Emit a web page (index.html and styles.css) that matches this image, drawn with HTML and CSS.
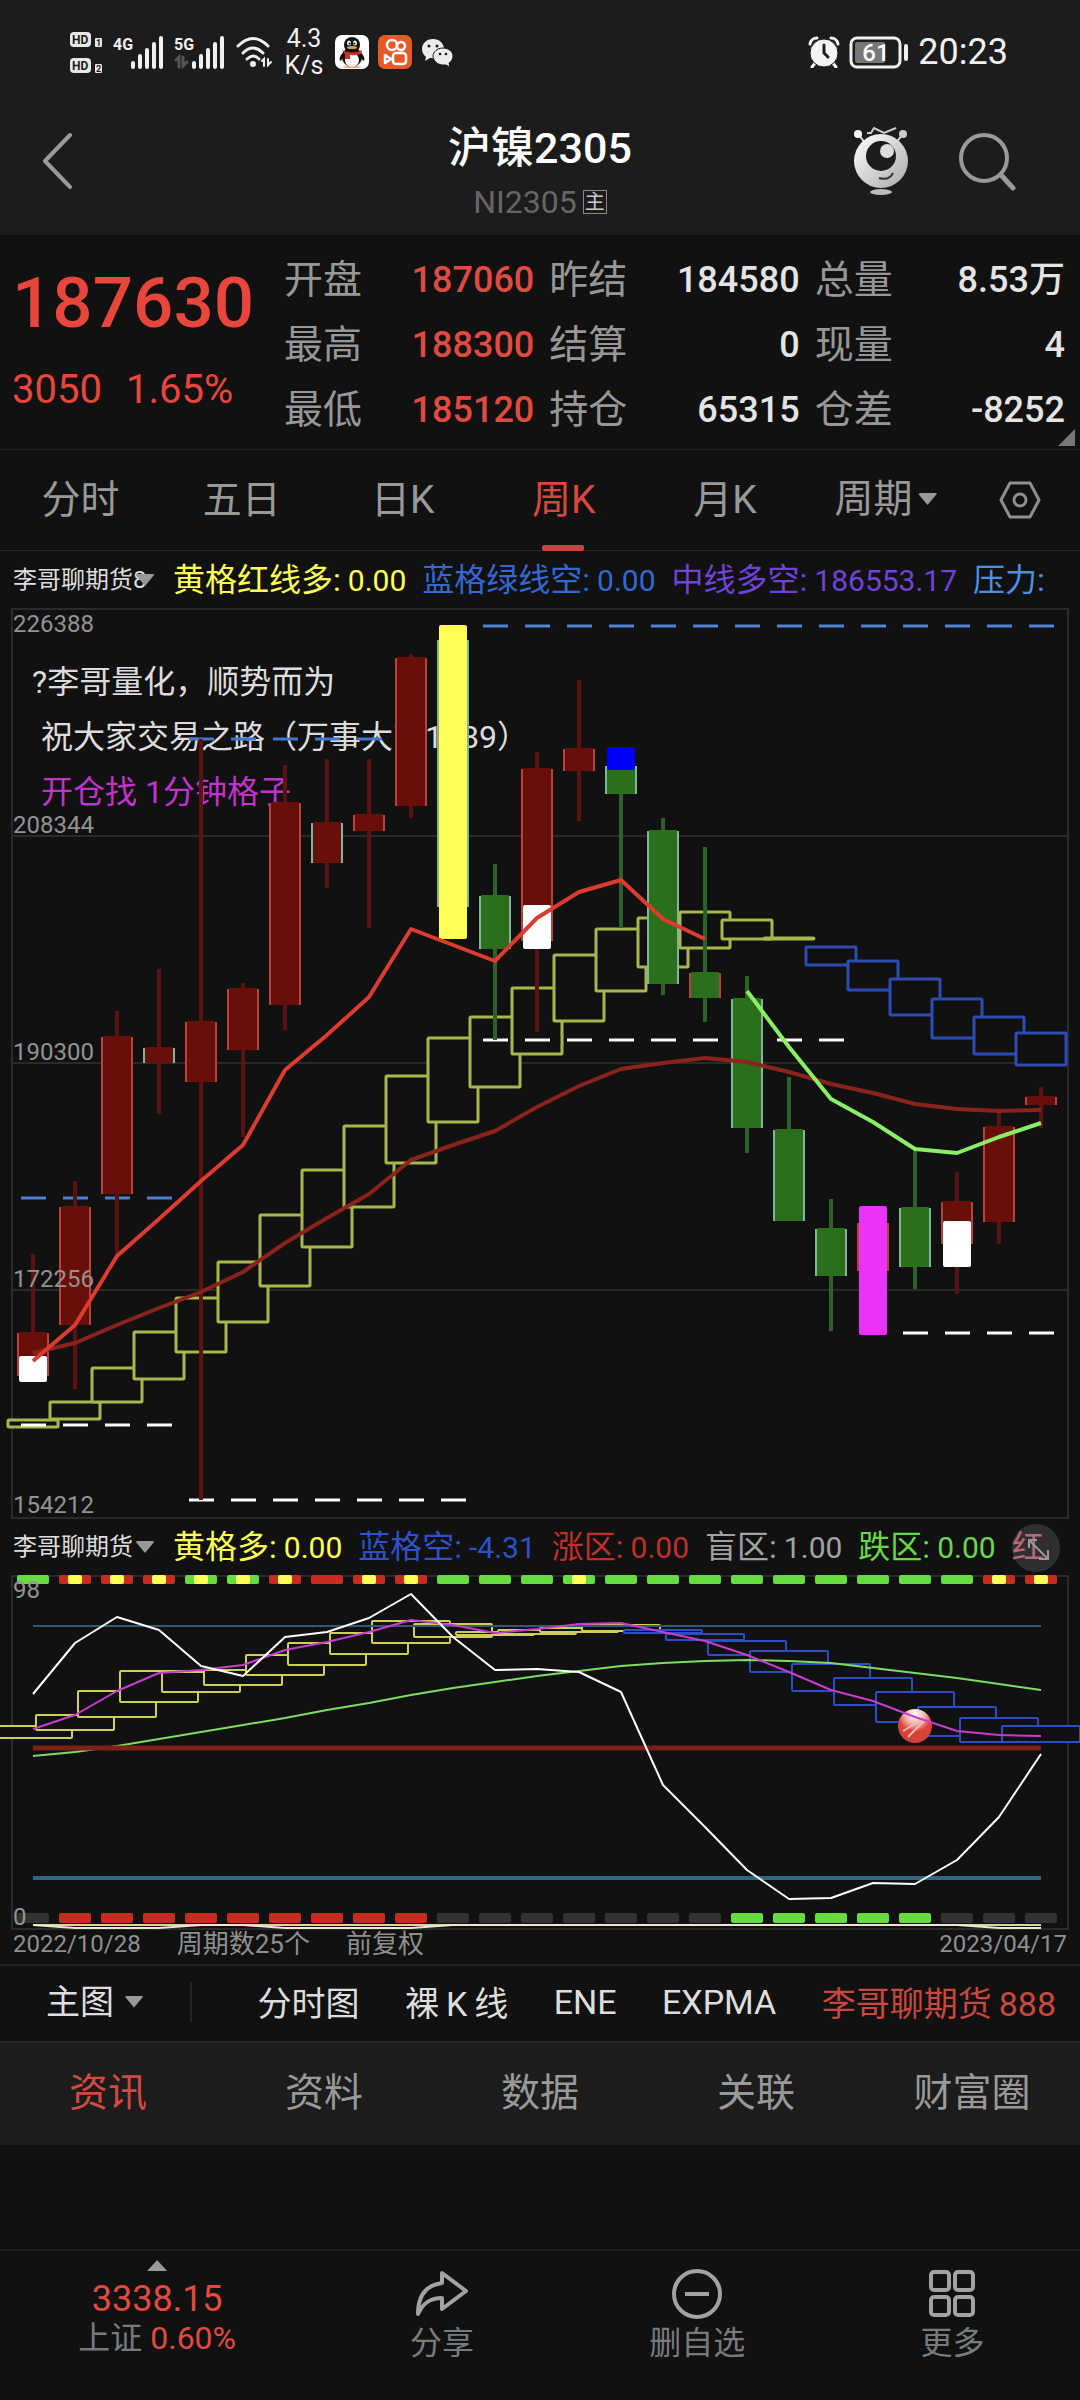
FILE: index.html
```html
<!DOCTYPE html>
<html lang="zh-CN">
<head>
    <meta charset="UTF-8">
    <meta name="viewport" content="width=device-width, initial-scale=1.0">
    <title>沪镍2305</title>
    <link rel="stylesheet" href="styles.css">
</head>
<body>
    <div class="status-bar">
        <div class="status-left">
            <svg class="hd" width="34" height="42" viewBox="0 0 34 42">
                <rect x="0" y="1" width="21" height="15" rx="4" fill="#e8e8e8"/>
                <rect x="0" y="27" width="21" height="15" rx="4" fill="#e8e8e8"/>
                <rect x="25" y="7" width="7" height="9" rx="1" fill="#e8e8e8"/>
                <rect x="25" y="33" width="7" height="9" rx="1" fill="#e8e8e8"/>
                <text x="2" y="13" class="hd-text">HD</text>
                <text x="2" y="39" class="hd-text">HD</text>
                <text x="26" y="15" class="hd-num">1</text>
                <text x="26" y="41" class="hd-num">2</text>
            </svg>
            <svg class="signal" width="52" height="34" viewBox="0 0 52 34">
                <text x="0" y="15" class="net-text">4G</text>
                <path d="M20 28v4M27 21v11M34 15v17M41 9v23M48 3v29"/>
            </svg>
            <svg class="signal" width="52" height="34" viewBox="0 0 52 34">
                <text x="0" y="15" class="net-text">5G</text>
                <path d="M20 28v4M27 21v11M34 15v17M41 9v23M48 3v29"/>
                <path class="dim" d="M2 25l3-3v10M9 22v9l4-4"/>
            </svg>
            <svg width="38" height="34" viewBox="0 0 38 34" fill="none" stroke="#f0f0f0" stroke-width="3" stroke-linecap="round">
                <path d="M3 11Q18-4 33 11M8 18Q18 8 28 18M12 24Q18 18 24 24"/>
                <circle cx="18" cy="29" r="3" fill="#f0f0f0" stroke="none"/>
                <path d="M27 26l2-2v7M33 24v6l3-3" stroke-width="2"/>
            </svg>
            <span class="speed">4.3<br>K/s</span>
            <svg width="34" height="34" viewBox="0 0 34 34">
                <rect width="34" height="34" rx="7" fill="#fff"/>
                <ellipse cx="17" cy="32" rx="9" ry="1" fill="#e2b24c"/>
                <ellipse cx="17" cy="22" rx="10" ry="10" fill="#111"/>
                <path d="M9 16Q3 23 5 26L9 23zM25 16Q31 23 29 26L25 23z" fill="#111"/>
                <ellipse cx="17" cy="10" rx="8" ry="8" fill="#111"/>
                <ellipse cx="17" cy="25" rx="7" ry="7" fill="#fff"/>
                <ellipse cx="14" cy="8" rx="2" ry="2.5" fill="#fff"/>
                <ellipse cx="20" cy="8" rx="2" ry="2.5" fill="#fff"/>
                <circle cx="14.500" cy="8.500" r="1"/>
                <circle cx="19.500" cy="8.500" r="1"/>
                <ellipse cx="17" cy="12.500" rx="5" ry="1.500" fill="#e2a03c"/>
                <path d="M7 15Q17 20 27 15L26 19Q20 21 15 20V24H10V19Z" fill="#c9332c"/>
            </svg>
            <svg width="34" height="34" viewBox="0 0 34 34" fill="none" stroke="#fff" stroke-width="2.500">
                <rect width="34" height="34" rx="7" fill="#e65a28" stroke="none"/>
                <circle cx="14" cy="10" r="5"/>
                <circle cx="23" cy="11" r="4"/>
                <rect x="15" y="18" width="13" height="11" rx="3"/>
                <path d="M7 20v8l6-4z" stroke-linejoin="round"/>
            </svg>
            <svg width="34" height="34" viewBox="0 0 34 34" fill="#ececec">
                <path d="M12 4C5 4 1 9 1 14c0 4 2 6 4 8l-1 4 5-3c8 1 14-3 14-9S18 4 12 4z"/>
                <path d="M22 13c-6 0-10 4-10 8s4 9 10 9h3l4 2-1-4c2-1 4-4 4-7 0-4-4-8-10-8z" stroke="#1c1c1c" stroke-width="1"/>
                <g fill="#1c1c1c"><circle cx="8" cy="11" r="1.500"/><circle cx="16" cy="11" r="1.500"/><circle cx="19" cy="19" r="1.300"/><circle cx="25" cy="19" r="1.300"/></g>
            </svg>
        </div>
        <div class="status-right">
            <svg width="32" height="32" viewBox="0 0 32 32">
                <path d="M2 8a7 7 0 0 1 7-6M30 8a7 7 0 0 0-7-6M8 26l-4 5M24 26l4 5" stroke="#f4f4f4" stroke-width="3" fill="none" stroke-linecap="round"/>
                <circle cx="16" cy="17" r="14" fill="#f4f4f4" stroke="#1c1c1c" stroke-width="1"/>
                <path d="M16 9v8l4 4" stroke="#1c1c1c" stroke-width="3" fill="none" stroke-linecap="round"/>
            </svg>
            <svg class="battery" width="60" height="33" viewBox="0 0 60 33">
                <rect x="6" y="6" width="30" height="21" rx="2" fill="#777"/>
                <rect x="2" y="2" width="49" height="29" rx="6" fill="none" stroke="#f0f0f0" stroke-width="3"/>
                <rect x="55" y="8" width="4" height="17" rx="2" fill="#f0f0f0"/>
                <text x="27" y="25" text-anchor="middle">61</text>
            </svg>
            <span class="clock">20:23</span>
        </div>
    </div>

    <header class="header">
        <button class="icon-btn" aria-label="返回">
            <svg width="30" height="56" viewBox="0 0 30 56" fill="none" stroke="#9a9a9a" stroke-width="4" stroke-linecap="round" stroke-linejoin="round"><path d="M27 2L2 28l25 26"/></svg>
        </button>
        <div class="heading">
            <h1>沪镍2305</h1>
            <p>NI2305<span class="main-tag">主</span></p>
        </div>
        <div class="header-actions">
            <button class="icon-btn" aria-label="助手">
                <svg width="60" height="72" viewBox="0 0 60 72">
                    <defs>
                        <linearGradient id="head" x1="0" y1="0" x2="1" y2="1">
                            <stop offset="0" stop-color="#fff"/>
                            <stop offset="1" stop-color="#aaa"/>
                        </linearGradient>
                    </defs>
                    <path d="M8 10l6 8M51 10l-6 8" stroke="#ddd" stroke-width="2"/>
                    <circle cx="7" cy="9" r="4" fill="#fff"/>
                    <circle cx="52" cy="9" r="4" fill="#ccc"/>
                    <path d="M16 8h4l3-5 10 5 12-5" fill="none" stroke="#ccc" stroke-width="2"/>
                    <circle cx="30" cy="36" r="27" fill="url(#head)"/>
                    <circle cx="30" cy="31" r="15" fill="#1c1c1c"/>
                    <circle cx="36" cy="26" r="7" fill="#ddd"/>
                    <path d="M28 53q10 3 14-5" fill="none" stroke="#333" stroke-width="2"/>
                    <ellipse cx="30" cy="67" rx="11" ry="3" fill="#bbb"/>
                </svg>
            </button>
            <button class="icon-btn" aria-label="搜索">
                <svg width="60" height="60" viewBox="0 0 60 60" fill="none" stroke="#999" stroke-width="4" stroke-linecap="round"><circle cx="27" cy="27" r="23"/><path d="M44 44l12 13" stroke-width="5"/></svg>
            </button>
        </div>
    </header>

    <section class="quote">
        <div class="price">
            <strong>187630</strong>
            <p><span>3050</span><span>1.65%</span></p>
        </div>
        <dl class="quote-grid">
            <div><dt>开盘</dt><dd class="up">187060</dd></div>
            <div><dt>昨结</dt><dd>184580</dd></div>
            <div><dt>总量</dt><dd>8.53万</dd></div>
            <div><dt>最高</dt><dd class="up">188300</dd></div>
            <div><dt>结算</dt><dd>0</dd></div>
            <div><dt>现量</dt><dd>4</dd></div>
            <div><dt>最低</dt><dd class="up">185120</dd></div>
            <div><dt>持仓</dt><dd>65315</dd></div>
            <div><dt>仓差</dt><dd>-8252</dd></div>
        </dl>
    </section>

    <nav class="period-tabs">
        <button>分时</button>
        <button>五日</button>
        <button>日K</button>
        <button class="active">周K</button>
        <button>月K</button>
        <div class="dropdown">
            <select aria-label="周期"><option>周期</option></select>
        </div>
        <button class="settings" aria-label="设置">
            <svg width="42" height="38" viewBox="0 0 42 38" fill="none" stroke="#8f8f8f" stroke-width="3" stroke-linejoin="round"><path d="M11 2h20l9 17-9 17H11L2 19z"/><circle cx="21" cy="19" r="6"/></svg>
        </button>
    </nav>

    <section class="panel">
        <div class="legend">
            <div class="dropdown indicator">
                <select aria-label="主图指标"><option>李哥聊期货8</option></select>
            </div>
            <div class="legend-items">
                <span class="c-yellow">黄格红线多:<b>0.00</b></span>
                <span class="c-blue">蓝格绿线空:<b>0.00</b></span>
                <span class="c-purple">中线多空:<b>186553.17</b></span>
                <span class="c-sky">压力:</span>
            </div>
        </div>
        <svg id="mainChart" class="chart" viewBox="0 610 1080 909"></svg>
    </section>

    <section class="panel">
        <div class="legend">
            <div class="dropdown indicator">
                <select aria-label="副图指标"><option>李哥聊期货</option></select>
            </div>
            <div class="legend-items">
                <span class="c-yellow">黄格多:<b>0.00</b></span>
                <span class="c-navy">蓝格空:<b>-4.31</b></span>
                <span class="c-red">涨区:<b>0.00</b></span>
                <span class="c-gray">盲区:<b>1.00</b></span>
                <span class="c-green">跌区:<b>0.00</b></span>
                <span class="c-pink">红</span>
            </div>
            <button class="expand" aria-label="放大">
                <svg width="48" height="48" viewBox="0 0 48 48" fill="none" stroke="#999" stroke-width="2"><path d="M17 24v-8h8M17 16l18 18M36 26v9H27"/></svg>
            </button>
        </div>
        <svg id="subChart" class="chart" viewBox="0 1577 1080 353"></svg>
        <div class="dates">
            <span>2022/10/28</span>
            <span class="cn">周期数25个</span>
            <span class="cn">前复权</span>
            <span class="end">2023/04/17</span>
        </div>
    </section>

    <div class="indicator-bar">
        <div class="dropdown pane">
            <select aria-label="图区"><option>主图</option></select>
        </div>
        <button>分时图</button>
        <button>裸&thinsp;K&thinsp;线</button>
        <button>ENE</button>
        <button>EXPMA</button>
        <button class="active">李哥聊期货&thinsp;888</button>
    </div>

    <nav class="info-tabs">
        <button class="active">资讯</button>
        <button>资料</button>
        <button>数据</button>
        <button>关联</button>
        <button>财富圈</button>
    </nav>

    <footer class="bottom-nav">
        <a class="index" href="#">
            <span class="index-price">3338.15</span>
            <span>上证 <em>0.60%</em></span>
        </a>
        <button>
            <svg width="54" height="50" viewBox="0 0 54 50" fill="none" stroke="#a2a2a2" stroke-width="4" stroke-linejoin="round"><path d="M27 4l24 18-24 18V29C15 29 8 34 3 45 3 26 12 16 27 14z"/></svg>
            分享
        </button>
        <button>
            <svg width="54" height="50" viewBox="0 0 54 50" fill="none" stroke="#a2a2a2" stroke-width="4"><circle cx="27" cy="25" r="23"/><path d="M15 25h24"/></svg>
            删自选
        </button>
        <button>
            <svg width="54" height="50" viewBox="0 0 54 50" fill="none" stroke="#a2a2a2" stroke-width="4"><rect x="6" y="3" width="18" height="18" rx="3"/><rect x="30" y="3" width="18" height="18" rx="3"/><rect x="6" y="28" width="18" height="18" rx="3"/><rect x="30" y="28" width="18" height="18" rx="3"/></svg>
            更多
        </button>
    </footer>

    <script src="script.js"></script>
</body>
</html>
```

FILE: styles.css
```css
* {
    box-sizing: border-box;
}

body {
    margin: 0;
    min-height: 100vh;
    display: flex;
    flex-direction: column;
    background-color: #111;
    color: #ddd;
    font-family: Roboto, "Noto Sans CJK SC", sans-serif;
    overflow-x: hidden;
}

h1, p, dl, dd {
    margin: 0;
}

button, select {
    padding: 0;
    border: none;
    background: none;
    color: inherit;
    font: inherit;
    cursor: pointer;
}

select {
    appearance: none;
}

svg {
    display: block;
    flex: none;
}

/* status bar */
.status-bar {
    display: flex;
    justify-content: space-between;
    align-items: center;
    height: 104px;
    padding: 0 72px 0 70px;
    background-color: #1c1c1c;
    color: #f0f0f0;
}

.status-left, .status-right {
    display: flex;
    align-items: center;
    gap: 9px;
}

.hd-text {
    font-size: 12px;
    font-weight: 700;
    fill: #1c1c1c;
}

.hd-num {
    font-size: 9px;
    font-weight: 700;
    fill: #1c1c1c;
}

.signal path {
    stroke: #f0f0f0;
    stroke-width: 4;
    stroke-linecap: round;
}

.signal .dim {
    stroke: #555;
    stroke-width: 3;
    fill: none;
}

.net-text {
    font-size: 16px;
    font-weight: 700;
    fill: #f0f0f0;
}

.speed {
    width: 44px;
    font-size: 25px;
    line-height: 27px;
    text-align: center;
}

.battery text {
    font-size: 24px;
    font-weight: 500;
    fill: #fff;
}

.clock {
    font-size: 36px;
}

/* header */
.header {
    display: grid;
    grid-template-columns: 1fr auto 1fr;
    align-items: center;
    height: 132px;
    padding: 0 43px;
    background-color: #1c1c1c;
    border-bottom: 1px solid #0c0c0c;
}

.icon-btn {
    justify-self: start;
    padding-bottom: 18px;
}

.heading {
    text-align: center;
    padding-top: 8px;
}

.heading h1 {
    font-size: 43px;
    font-weight: 500;
    line-height: 56px;
    color: #fff;
}

.heading p {
    display: flex;
    justify-content: center;
    align-items: center;
    gap: 6px;
    font-size: 32px;
    line-height: 52px;
    color: #666;
}

.main-tag {
    width: 24px;
    height: 24px;
    border: 1px solid #888;
    font-size: 20px;
    line-height: 22px;
    color: #ccc;
}

.header-actions {
    display: flex;
    justify-content: flex-end;
    align-items: center;
    gap: 46px;
    margin-right: 20px;
}

/* quote */
.quote {
    position: relative;
    display: flex;
    padding: 12px 15px 6px 12px;
    border-bottom: 1px solid #222;
}

.quote::after {
    content: "";
    position: absolute;
    right: 5px;
    bottom: 3px;
    width: 17px;
    height: 17px;
    background-color: #777;
    clip-path: polygon(100% 0, 100% 100%, 0 100%);
}

.price {
    width: 272px;
    color: #e8463c;
}

.price strong {
    display: block;
    font-size: 71px;
    font-weight: 500;
    line-height: 110px;
}

.price p {
    display: flex;
    gap: 24px;
    font-size: 40px;
    line-height: 64px;
}

.quote-grid {
    flex: 1;
    display: grid;
    grid-template-columns: repeat(3, 1fr);
    column-gap: 15px;
    line-height: 65px;
}

.quote-grid div {
    display: flex;
    justify-content: space-between;
}

.quote-grid dt {
    font-size: 39px;
    color: #979797;
}

.quote-grid dd {
    font-size: 36px;
    font-weight: 500;
    color: #e4e4e4;
}

.quote-grid .up {
    color: #e04a40;
}

/* tabs */
.period-tabs {
    display: flex;
    height: 101px;
    border-bottom: 1px solid #2a2a2a;
    font-size: 39px;
    color: #999;
}

.period-tabs > * {
    position: relative;
    flex: 3;
    padding-bottom: 8px;
}

.period-tabs .dropdown {
    padding-bottom: 2px;
}

.period-tabs .settings {
    display: flex;
    align-items: center;
    justify-content: center;
    flex: 2;
    padding: 0 6px 0 0;
}

.period-tabs .active {
    color: #d9483f;
}

.period-tabs .active::after {
    content: "";
    position: absolute;
    left: 50%;
    bottom: -1px;
    width: 42px;
    height: 6px;
    margin-left: -22px;
    border-radius: 2px;
    background-color: #c8453d;
}

.dropdown {
    display: flex;
    align-items: center;
    justify-content: center;
    gap: 4px;
}

.dropdown::after {
    content: "";
    width: 20px;
    height: 12px;
    background-color: #999;
    border-radius: 3px;
    clip-path: polygon(0 0, 100% 0, 50% 100%);
}

/* charts */
.legend {
    position: relative;
    display: flex;
    align-items: center;
    height: 58px;
    padding-left: 13px;
    overflow: hidden;
    white-space: nowrap;
}

.indicator {
    position: relative;
    flex: none;
    width: 160px;
    justify-content: flex-start;
    font-size: 24px;
}

.indicator::after {
    position: absolute;
    left: 122px;
}

.legend-items {
    display: flex;
    gap: 16px;
    font-size: 32px;
    line-height: 48px;
}

.legend-items b {
    margin-left: 7px;
    font-size: 30px;
    font-weight: 400;
}

.c-yellow { color: #ffff55; }
.c-blue { color: #3567d0; }
.c-navy { color: #2f52c8; }
.c-purple { color: #6f42d8; }
.c-sky { color: #4a90e2; }
.c-red { color: #c03028; }
.c-gray { color: #a2a2a2; }
.c-green { color: #66d84a; }
.c-pink { color: #d0627c; }

.expand {
    position: absolute;
    right: 20px;
    top: 6px;
    width: 48px;
    height: 48px;
    border-radius: 50%;
    background-color: rgba(120, 120, 120, 0.3);
}

.chart {
    width: 100%;
    height: auto;
    overflow: visible;
}

.axis {
    font-size: 24px;
    fill: #939393;
}

.note {
    font-size: 32px;
    fill: #dcdcdc;
}

.note-pink {
    fill: #c233cc;
}

.frame, .grid {
    fill: none;
    stroke: #2a2a2a;
    stroke-width: 2;
}

.line {
    fill: none;
    stroke-linejoin: round;
}

.dates {
    display: flex;
    align-items: center;
    gap: 36px;
    height: 37px;
    padding: 0 13px 6px;
    border-bottom: 2px solid #222;
    font-size: 24px;
    line-height: 28px;
    color: #8f8f8f;
}

.dates .cn {
    font-size: 26px;
}

.dates .end {
    margin-left: auto;
}

/* indicator list */
.indicator-bar {
    display: flex;
    justify-content: space-between;
    align-items: center;
    height: 77px;
    padding: 0 24px 4px 46px;
    border-bottom: 2px solid #262626;
    font-size: 34px;
    color: #dedede;
    white-space: nowrap;
}

.indicator-bar .pane {
    gap: 10px;
    height: 40px;
    padding-right: 46px;
    margin-right: 20px;
    border-right: 2px solid #252525;
}

.indicator-bar .active {
    color: #c9473f;
}

.info-tabs {
    display: flex;
    height: 102px;
    background-color: #1c1c1c;
    font-size: 39px;
    color: #999;
}

.info-tabs button {
    flex: 1;
    padding-bottom: 10px;
}

.info-tabs .active {
    color: #cf4a42;
}

/* bottom nav */
.bottom-nav {
    display: flex;
    height: 151px;
    margin-top: auto;
    padding-top: 18px;
    border-top: 2px solid #202020;
    font-size: 32px;
    line-height: 48px;
    color: #777b7e;
}

.bottom-nav > * {
    flex: 255;
    display: flex;
    flex-direction: column;
    align-items: center;
}

.bottom-nav .index {
    position: relative;
    flex: 314;
    padding-top: 11px;
    color: inherit;
    text-decoration: none;
    line-height: 39px;
}

.index::before {
    content: "";
    position: absolute;
    top: -9px;
    width: 20px;
    height: 11px;
    background-color: #999;
    clip-path: polygon(50% 0, 100% 100%, 0 100%);
}

.index-price {
    font-size: 36px;
    color: #e04a40;
}

.index em {
    font-style: normal;
    color: #e04a40;
}
```

FILE: script.js
```js
const STEP = 42;
const cx = i => 33 + i * STEP;

const rect = (x, y, w, h, fill, extra = '') =>
    `<rect x="${x}" y="${y}" width="${w}" height="${h}" fill="${fill}" ${extra}/>`;

const line = (x1, y1, x2, y2, color, width) =>
    `<line x1="${x1}" y1="${y1}" x2="${x2}" y2="${y2}" stroke="${color}" stroke-width="${width}"/>`;

// one point per candle, starting at candle `start`
const polyline = (ys, start, color, width) => {
    const points = ys.map((y, k) => `${cx(start + k)},${y}`).join(' ');
    return `<polyline class="line" points="${points}" stroke="${color}" stroke-width="${width}"/>`;
};

const boxes = (list, start, half, color, width) =>
    list.map(([top, bottom], k) => rect(cx(start + k) - half, top, half * 2, bottom - top, '#111',
        `stroke="${color}" stroke-width="${width}" rx="1"`)).join('');

const dashes = (from, to, y, color) => {
    let html = '';
    for (let i = from; i <= to; i++) {
        html += line(cx(i) - 12, y, cx(i) + 13, y, color, 3);
    }
    return html;
};

const RED = '#690f09', GREEN = '#2b6e1c';

// [high, open/close top, open/close bottom, low, fill, edge]
const candles = [
    [1255, 1333, 1377, 1377, RED, 'r'],
    [1182, 1207, 1326, 1390, RED, 'r'],
    [1012, 1037, 1195, 1255, RED, 'r'],
    [970, 1048, 1064, 1115, RED, 'g'],
    [740, 1022, 1083, 1501, RED, 'r'],
    [984, 989, 1051, 1138, RED, 'r'],
    [766, 803, 1006, 1031, RED, 'r'],
    [760, 823, 864, 889, RED, 'g'],
    [760, 815, 832, 929, RED, 'r'],
    [655, 658, 807, 819, RED, 'r'],
    [640, 640, 908, 908, RED, 'g'],
    [865, 896, 950, 1041, GREEN, 'g'],
    [753, 769, 942, 1033, RED, 'r'],
    [681, 749, 772, 822, RED, 'r'],
    [766, 766, 795, 929, GREEN, 'g'],
    [819, 831, 985, 996, GREEN, 'g'],
    [848, 973, 999, 1023, GREEN, 'r'],
    [977, 999, 1129, 1154, GREEN, 'g'],
    [1078, 1130, 1222, 1222, GREEN, 'g'],
    [1200, 1229, 1277, 1332, GREEN, 'g'],
    [1223, 1223, 1272, 1272, RED, 'r'],
    [1152, 1208, 1268, 1290, GREEN, 'g'],
    [1173, 1202, 1245, 1295, RED, 'r'],
    [1109, 1127, 1223, 1245, RED, 'r'],
    [1088, 1097, 1106, 1129, RED, 'r']
];

// signal blocks drawn over a candle: index, top, bottom, colour
const blocks = [
    [0, 1357, 1383, '#fff'],
    [10, 626, 940, '#ffff55'],
    [12, 906, 950, '#fff'],
    [14, 748, 771, '#0000fa'],
    [20, 1207, 1336, '#ea33f7'],
    [22, 1222, 1268, '#fff']
];

const yellowBoxes = [
    [1421, 1428], [1403, 1420], [1369, 1403], [1333, 1380], [1299, 1353], [1263, 1323],
    [1216, 1287], [1171, 1248], [1127, 1208], [1077, 1164], [1039, 1123], [1018, 1088],
    [989, 1055], [956, 1022], [930, 992], [919, 968], [913, 949], [921, 940], [939, 940]
];
const blueBoxes = [[948, 966], [962, 991], [980, 1016], [1000, 1039], [1018, 1055], [1034, 1066]];

function drawMain() {
    let html = rect(12, 610, 1056, 909, 'none', 'class="frame"');
    [837, 1064, 1291].forEach(y => {
        html += `<path class="grid" d="M12 ${y}H1068"/>`;
    });

    html += '<text class="note" x="32" y="694">?李哥量化，顺势而为</text>';
    html += '<text class="note" x="41" y="749">祝大家交易之路（万事大吉1889）</text>';
    html += '<text class="note note-pink" x="41" y="804">开仓找 1分钟格子</text>';

    html += boxes(yellowBoxes, 0, 25, '#a9b64c', 3);
    html += boxes(blueBoxes, 19, 25, '#2c4cb4', 3);

    html += dashes(0, 3, 1199, '#4f7fd0');
    html += dashes(4, 8, 740, '#3f78d0');
    html += dashes(11, 24, 627, '#5083d8');
    html += dashes(0, 3, 1426, '#fff');
    html += dashes(4, 10, 1501, '#fff');
    html += dashes(11, 19, 1041, '#fff');
    html += dashes(21, 24, 1334, '#fff');

    candles.forEach(([high, top, bottom, low, fill, edge], i) => {
        const x = cx(i);
        html += line(x, high, x, low, fill === RED ? '#5a1310' : '#2f5f2a', 4);
        html += rect(x - 16, top + 1, 32, bottom - top - 1, edge === 'r' ? '#b5423c' : '#7fb59a');
        html += rect(x - 14, top, 28, bottom - top, fill, 'rx="1"');
    });
    blocks.forEach(([i, top, bottom, fill]) => {
        html += rect(cx(i) - 14, top, 28, bottom - top, fill, 'rx="2"');
    });

    html += polyline([1354, 1344, 1326, 1309, 1293, 1273, 1244, 1219, 1195, 1161, 1146, 1132, 1108,
        1087, 1070, 1064, 1059, 1063, 1073, 1085, 1094, 1105, 1110, 1112, 1111], 0, '#8b231d', 4);
    html += polyline([1362, 1326, 1257, 1220, 1182, 1146, 1071, 1036, 998, 930, 946, 962, 919,
        893, 881, 920, 940], 0, '#dc3b30', 4);
    html += polyline([992, 1048, 1100, 1123, 1150, 1154, 1138, 1124], 17, '#8aee66', 4);

    [[226388, 633], [208344, 834], [190300, 1061], [172256, 1288], [154212, 1514]].forEach(([v, y]) => {
        html += `<text class="axis" x="13" y="${y}">${v}</text>`;
    });

    document.getElementById('mainChart').innerHTML = html;
}

const subYellow = [
    [1727, 1739], [1716, 1731], [1692, 1718], [1672, 1703], [1673, 1693], [1671, 1686],
    [1656, 1676], [1644, 1666], [1634, 1655], [1622, 1644], [1625, 1638], [1633, 1636],
    [1631, 1635], [1629, 1633], [1626, 1632]
];
const subBlue = [
    [1631, 1634], [1635, 1641], [1642, 1656], [1652, 1673], [1665, 1692],
    [1679, 1706], [1693, 1723], [1708, 1737], [1719, 1743], [1727, 1743]
];

// g green, r red, x grey; upper case adds the yellow centre
const topMarks = 'gRRRGGRrRRgggGgggggggggRR';
const bottomMarks = 'xrrrrrrrrrxxxxxxxgggggxxx';
const markColors = { g: '#66dc40', r: '#c82c20', x: '#333' };

function drawMarks(marks, y, height) {
    let html = '';
    [...marks].forEach((m, i) => {
        html += rect(cx(i) - 16, y, 32, height, markColors[m.toLowerCase()], 'rx="2"');
        if (m < 'a') {
            html += rect(cx(i) - 7, y, 14, height, '#ffff55', 'rx="2"');
        }
    });
    return html;
}

function drawSub() {
    let html = `<defs><radialGradient id="ball" cx="0.5" cy="0.15" r="0.85">
        <stop offset="0" stop-color="#fff"/><stop offset="0.35" stop-color="#f0b0a8"/>
        <stop offset="0.6" stop-color="#dc4238"/><stop offset="1" stop-color="#c8443c"/>
    </radialGradient></defs>`;
    html += rect(12, 1577, 1056, 353, 'none', 'class="frame"');
    html += drawMarks(topMarks, 1576, 9);
    html += drawMarks(bottomMarks, 1914, 10);

    html += boxes(subYellow, 0, 39, '#cfcf58', 2);
    html += boxes(subBlue, 15, 39, '#2a4fc4', 2);
    html += polyline([1757, 1753, 1747, 1740, 1733, 1726, 1719, 1711, 1704, 1696, 1689, 1683, 1677,
        1672, 1667, 1664, 1662, 1661, 1662, 1664, 1669, 1674, 1679, 1685, 1691], 0, '#7ddc62', 2);

    html += line(33, 1627, 1041, 1627, '#34586e', 2);
    html += line(33, 1749, 1041, 1749, '#7d2018', 5);
    html += line(33, 1879, 1041, 1879, '#326680', 4);

    html += '<circle cx="915" cy="1727" r="17" fill="url(#ball)"/>';
    html += '<path d="M903 1732l20-12M908 1738l16-16" stroke="#f2b8b0" stroke-width="2"/>';

    html += polyline([1730, 1716, 1692, 1674, 1671, 1666, 1651, 1643, 1633, 1621, 1626, 1634, 1630,
        1625, 1624, 1633, 1642, 1656, 1673, 1691, 1702, 1718, 1732, 1736, 1737], 0, '#c83cd0', 2);
    html += polyline([1695, 1644, 1618, 1631, 1667, 1677, 1638, 1633, 1619, 1595, 1638, 1671, 1670,
        1673, 1693, 1786, 1828, 1871, 1900, 1899, 1884, 1885, 1861, 1818, 1755], 0, '#fff', 2);

    html += line(33, 1926, 1041, 1926, '#d8d49a', 2);
    html += polyline([1926, 1929, 1929, 1929, 1926, 1926, 1929, 1929, 1929, 1929, 1926, 1926, 1926,
        1926, 1926, 1926, 1926, 1926, 1926, 1926, 1926, 1926, 1926, 1929, 1929], 0, '#eee8d0', 2);

    html += '<text class="axis" x="13" y="1599">98</text><text class="axis" x="13" y="1926">0</text>';

    document.getElementById('subChart').innerHTML = html;
}

drawMain();
drawSub();
```
